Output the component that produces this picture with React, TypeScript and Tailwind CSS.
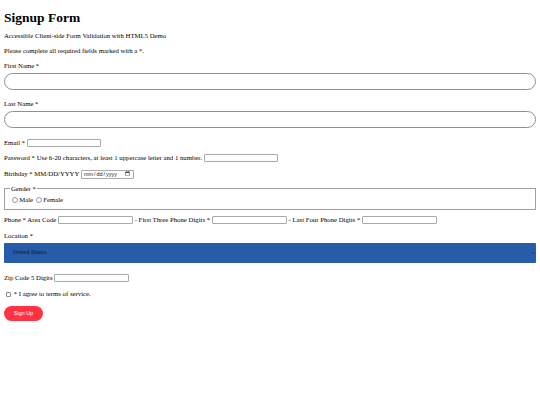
import React from "react";

// shared input looks
const box = "m-0 h-[8px] rounded-[1px] border border-[#a9a9a9] bg-white p-0";
const pill = "m-0 block h-[17px] w-full rounded-full border border-[#8f8f8f] bg-white";
const radio = "m-0 h-[5.5px] w-[5.5px] appearance-none rounded-full border border-[#9a9a9a] bg-white";
const sans = "font-[family-name:Liberation_Sans,Arial,sans-serif]";

function Label({ text, className = "" }: { text: string; className?: string }) {
  return <div className={`h-[8px] leading-[8px] ${className}`}>{text}</div>;
}

function Row({ children, className = "" }: { children: React.ReactNode; className?: string }) {
  return <div className={`flex h-[10px] items-center gap-[1.7px] whitespace-nowrap ${className}`}>{children}</div>;
}

export default function App() {
  return (
    <div className="min-h-screen w-full bg-white px-[4px] font-[family-name:Liberation_Serif,Times_New_Roman,serif] text-[6.75px] text-black">
      <form className="flex flex-col" onSubmit={(e) => e.preventDefault()}>
        <h1 className="mt-[9.5px] h-[15px] text-[13.5px] font-bold leading-[15px]">Signup Form</h1>
        <Label className="mt-[7.5px]" text="Accessible Client-side Form Validation with HTML5 Demo" />
        <Label className="mt-[7px]" text="Please complete all required fields marked with a *." />

        <Label className="mt-[7px]" text="First Name *" />
        <input className={`${pill} mt-[3px]`} type="text" />

        <Label className="mt-[10px]" text="Last Name *" />
        <input className={`${pill} mt-[3px]`} type="text" />

        <Row className="mt-[10px]">
          <span>Email *</span>
          <input className={`${box} w-[74px]`} type="email" />
        </Row>

        <Row className="mt-[5px]">
          <span>Password * Use 6-20 characters, at least 1 uppercase letter and 1 number.</span>
          <input className={`${box} w-[74px]`} type="password" />
        </Row>

        <Row className="mt-[6px]">
          <span>Birthday * MM/DD/YYYY</span>
          <input
            className={`m-0 h-[9px] w-[53px] rounded-[1px] border border-[#a9a9a9] bg-white px-[1px] py-0 text-[5.4px] text-[#222] ${sans}`}
            type="date"
          />
        </Row>

        <fieldset className="m-0 mt-[6px] h-[24.5px] border border-[#a0a0a0] px-[5px] pb-0 pt-[2.5px]">
          <legend className="px-[1px] leading-[7.75px]">Gender *</legend>
          <div className="flex h-[9px] items-center whitespace-nowrap">
            <input className={`${radio} ml-[2px] mr-[1.7px]`} type="radio" name="gender" />
            <span>Male</span>
            <input className={`${radio} ml-[3px] mr-[1.7px]`} type="radio" name="gender" />
            <span>Female</span>
          </div>
        </fieldset>

        <Row className="mt-[5.5px]">
          <span>Phone * Area Code</span>
          <input className={`${box} w-[75px]`} type="tel" />
          <span>- First Three Phone Digits *</span>
          <input className={`${box} w-[75px]`} type="tel" />
          <span>- Last Four Phone Digits *</span>
          <input className={`${box} w-[75px]`} type="tel" />
        </Row>

        <Label className="mt-[7px]" text="Location *" />
        <div className="relative mt-[3px] h-[20px]">
          <select className={`h-[20px] w-full appearance-none rounded-[1px] bg-[#275ca8] pl-[9px] text-[5.3px] font-bold text-[#1a2b4e] outline-none ${sans}`}>
            <option>United States</option>
          </select>
          <svg className="pointer-events-none absolute right-[1px] top-[8px] h-[4px] w-[4px]" viewBox="0 0 10 10">
            <path d="M2 3.5 L5 6.5 L8 3.5" fill="none" stroke="#1a2440" strokeWidth="2" />
          </svg>
        </div>

        <Row className="mt-[10px]">
          <span>Zip Code 5 Digits</span>
          <input className={`${box} w-[75px]`} type="text" />
        </Row>

        <Row className="mt-[6px]">
          <input
            className="m-0 ml-[1.5px] mr-[1.5px] h-[5px] w-[5px] appearance-none rounded-[1px] border border-[#8a8a8a] bg-white"
            type="checkbox"
          />
          <span>* I agree to terms of service.</span>
        </Row>

        <div className="mt-[7px]">
          <button
            type="submit"
            className={`h-[15px] w-[39px] rounded-full bg-[#ff3341] text-[5.3px] text-white ${sans}`}
          >
            Sign Up
          </button>
        </div>
      </form>
    </div>
  );
}
